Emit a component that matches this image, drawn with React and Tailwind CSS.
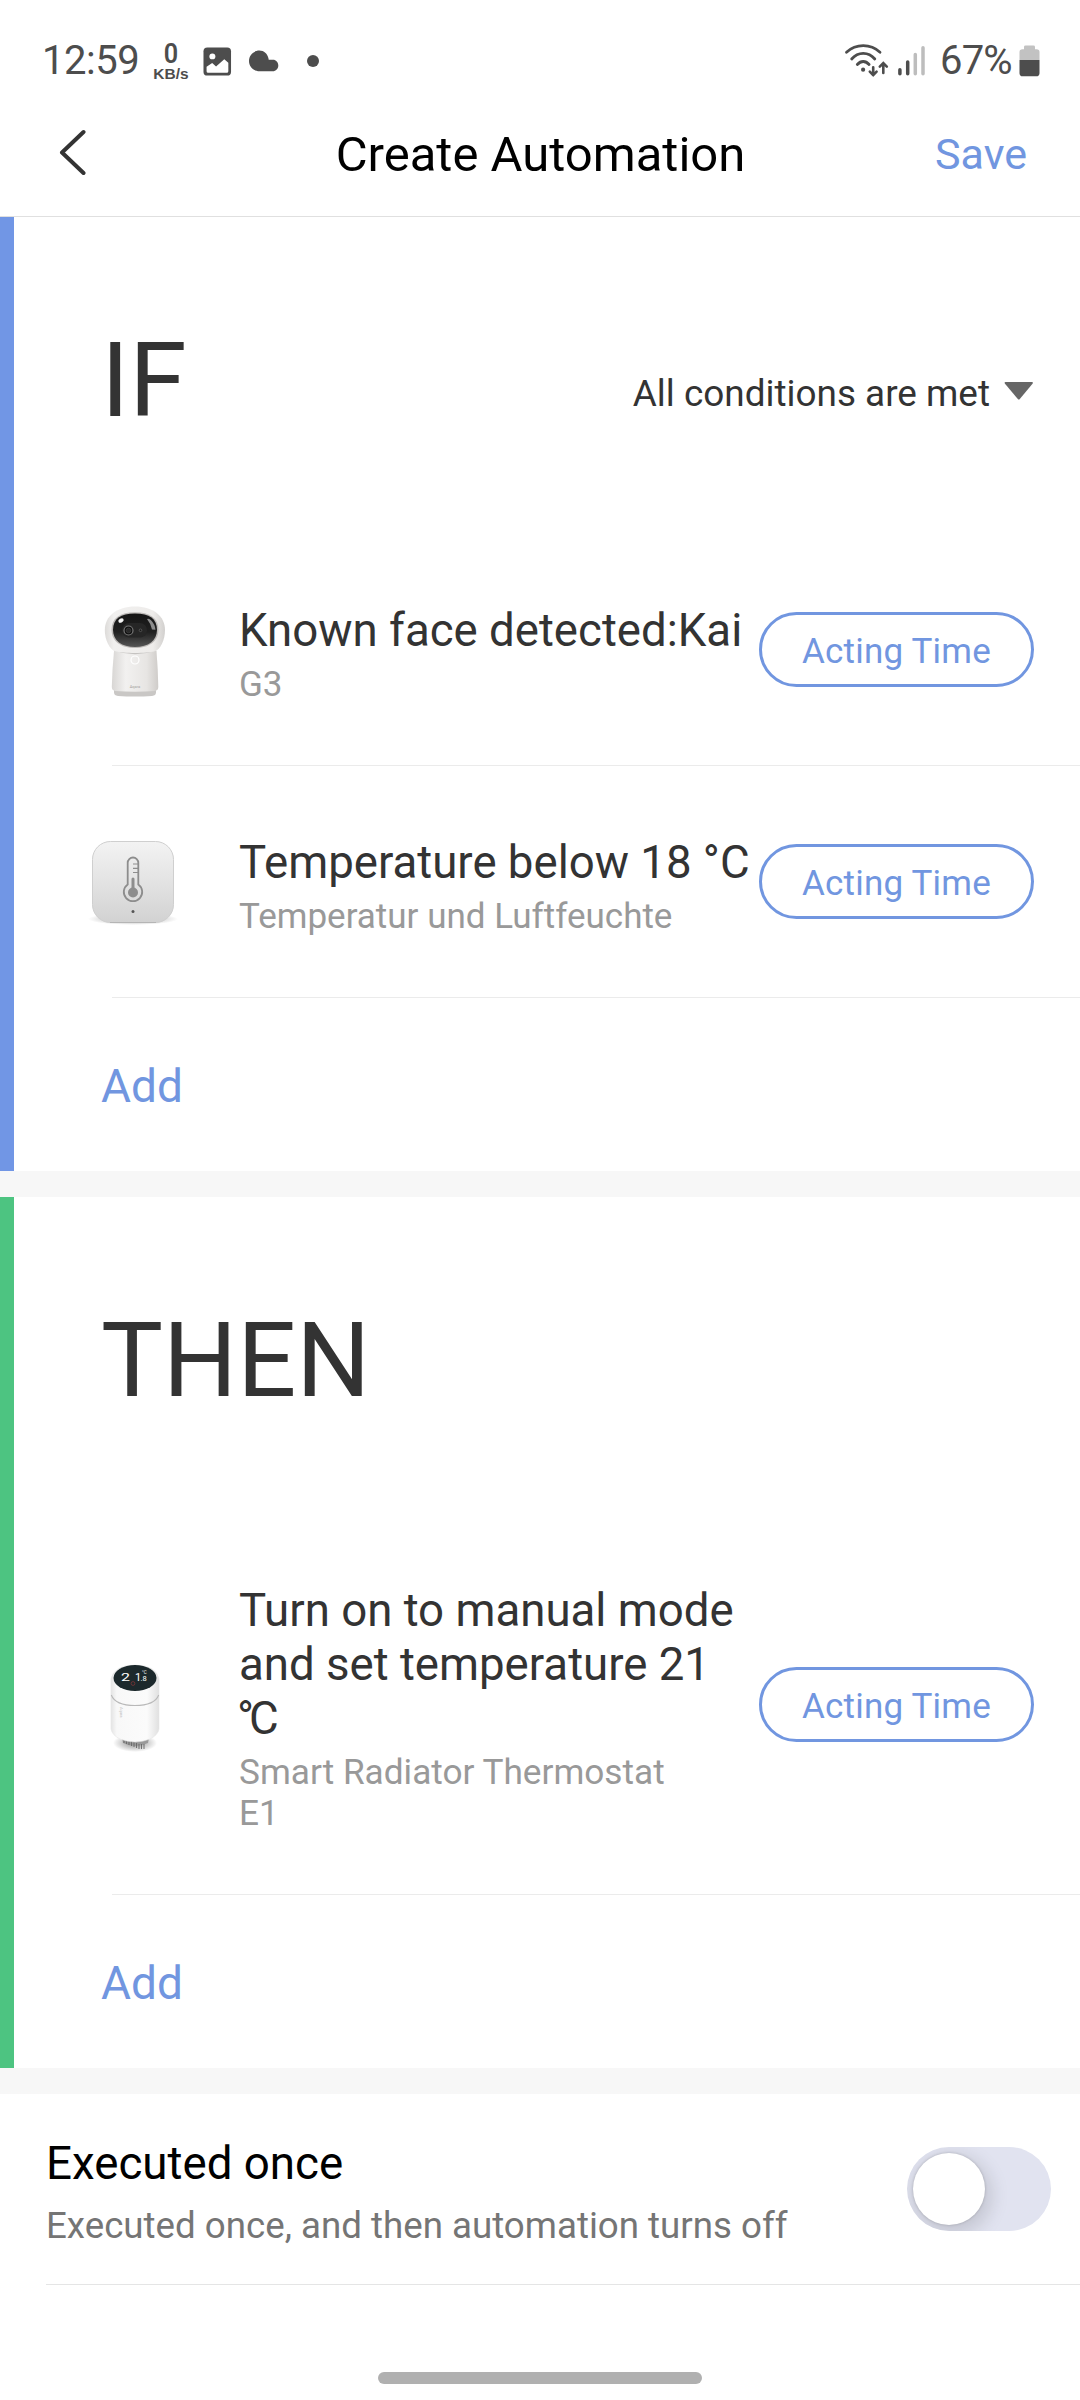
const BLUE_BAR = "bg-[#7196e5]";
const GREEN_BAR = "bg-[#4dc481]";

function StatusBar() {
  return (
    <div className="flex h-[120px] items-start justify-between pl-[42px] pr-[40px] pt-[37px] text-[#4d4d4d]">
      <div className="flex">
        <span className="w-[110px] text-[40px] leading-[48px] tracking-[-0.5px]">12:59</span>
        <div className="flex w-[38px] flex-col items-center pt-[5px] font-bold">
          <span className="h-[23px] scale-x-90 text-[28px] font-semibold leading-[23px]">0</span>
          <span className="font-['Liberation_Sans',sans-serif] text-[15.5px] leading-[18px]">KB/s</span>
        </div>
        <svg className="ml-[13px] mt-[10px]" width="29" height="29" viewBox="0 0 29 30">
          <rect x="0" y="0.5" width="28.5" height="29" rx="4" fill="#4d4d4d" />
          <circle cx="9.2" cy="9.7" r="3.1" fill="#fff" />
          <path d="M3.2 20.5 9 16.5l4 3.8 8.5-7.5 4.2 3.6V25a1.6 1.6 0 0 1-1.6 1.6H4.800a1.6 1.6 0 0 1-1.600-1.600z" fill="#fff" />
        </svg>
        <svg className="ml-[17px] mt-[13px]" width="30" height="22" viewBox="0 0 30 22">
          <path d="M10.300 0.600c4.700 0 8.200 3.200 9.200 7.900l.2 1.300h4.300c3 0 5.300 2.600 5.300 5.700 0 3.200-2.400 5.800-5.600 5.800H10.500C4.700 21.300 0 16.700 0 11 0 5.200 4.600.600 10.300.600z" fill="#4d4d4d" />
        </svg>
        <span className="ml-[28px] mt-[18px] size-3 rounded-full bg-[#4d4d4d]" />
      </div>
      <div className="flex">
        <svg className="mt-[6px]" width="47" height="36" viewBox="0 0 47 36" fill="none" stroke="#4d4d4d" strokeLinecap="round">
          <path d="M2.500 9.200C12 .400 26.500.400 36 9.200" strokeWidth="2.800" />
          <path d="M7.700 16c6.300-7.600 16.800-7.600 23.100 0" strokeWidth="2.800" />
          <path d="M13.300 21.500c3.600-4 8.200-4 11.800 0" strokeWidth="2.800" />
          <circle cx="19.100" cy="26.700" r="2.100" fill="#4d4d4d" stroke="none" />
          <path d="M29.200 24.300v7.700m-3.400-3.300 3.400 3.400 3.400-3.400M39.300 30V20.200m-3.500 3.500 3.500-3.500 3.500 3.500" strokeWidth="2.600" />
        </svg>
        <svg className="ml-[7px] mt-[8px]" width="29" height="32" viewBox="0 0 29 32" strokeWidth="3.500" strokeLinecap="round">
          <path d="M1.900 24.700v4.100M9.700 17.100v11.700" stroke="#4d4d4d" />
          <path d="M17.300 9.400v19.400M25 2.700v26.100" stroke="#bdbdbd" />
        </svg>
        <span className="ml-[13px] w-[79px] text-[40px] leading-[48px] tracking-[-0.8px]">67%</span>
        <svg className="mt-[8px]" width="21" height="32" viewBox="0 0 21 34" preserveAspectRatio="none">
          <path d="M6.500.500h8a1.500 1.500 0 0 1 1.500 1.500v2.500h1.500a3 3 0 0 1 3 3V16H.500V7.500a3 3 0 0 1 3-3H5V2A1.500 1.500 0 0 1 6.500.500z" fill="#c2c2c2" />
          <path d="M.500 16h20v14a3.300 3.300 0 0 1-3.300 3.300H3.800A3.300 3.300 0 0 1 .500 30z" fill="#4d4d4d" />
        </svg>
      </div>
    </div>
  );
}

function Header() {
  return (
    <header className="grid h-[97px] grid-cols-[1fr_auto_1fr] items-start border-b border-[#e0e0e0]">
      <button className="ml-[58px] mt-[8px] w-fit">
        <svg width="28" height="48" viewBox="0 0 28 48" fill="none">
          <path d="M25.500 4 4 24.500 25.500 45" stroke="#333" strokeWidth="4" strokeLinecap="round" strokeLinejoin="round" />
        </svg>
      </button>
      <h1 className="mt-[5px] pl-px text-[49px] leading-[60px] text-black">Create Automation</h1>
      <button className="mr-[53px] mt-[6px] justify-self-end text-[43px] leading-[56px] text-[#7196e0]">Save</button>
    </header>
  );
}

function CameraImage() {
  return (
    <svg width="62" height="94" viewBox="0 0 62 94">
      <defs>
        <linearGradient id="camHead" x1="0" x2="1">
          <stop offset="0" stopColor="#dddbd9" />
          <stop offset="0.15" stopColor="#f1f0ef" />
          <stop offset="0.8" stopColor="#eeecea" />
          <stop offset="1" stopColor="#d2d0ce" />
        </linearGradient>
        <linearGradient id="camBody" x1="0" x2="1">
          <stop offset="0" stopColor="#d8d6d4" />
          <stop offset="0.3" stopColor="#f2f1f0" />
          <stop offset="0.75" stopColor="#e7e5e3" />
          <stop offset="1" stopColor="#cfccc9" />
        </linearGradient>
        <linearGradient id="camFace" x1="0" y1="0" x2="0" y2="1">
          <stop offset="0" stopColor="#151515" />
          <stop offset="0.55" stopColor="#202020" />
          <stop offset="1" stopColor="#555" />
        </linearGradient>
      </defs>
      <path d="M10 83h42v3.500q0 3-4 3.500-17 1.200-34 0-4-.500-4-3.500z" fill="#c9c7c5" />
      <path d="M10 45h42.500q1.500 18 1.800 36 0 3.500-3.500 4-19.500 1.500-39.500 0-3.500-.500-3.500-4Q8.200 63 10 45z" fill="url(#camBody)" />
      <path d="M10 44q21 6.500 42 0" fill="none" stroke="#c5c3c1" strokeWidth="1.800" />
      <path d="M31 .500c18 0 30 9.500 30 23.500 0 10-4.500 19-10 21.300-9 2.200-31 2.200-40 0C5.500 43 .800 34 .800 24 .800 10 13 .500 31 .500z" fill="url(#camHead)" />
      <path d="M31 6.300c15 0 23.500 6 23.500 17.200C54.500 35.500 45 42 31 42S7.500 35.500 7.500 23.500C7.500 12.300 16 6.300 31 6.300z" fill="#bdbab8" />
      <path d="M31 7.500c14.500 0 22 5.500 22 16.200C53 34.500 44.500 41 31 41S9 34.500 9 23.700C9 13 16.500 7.500 31 7.500z" fill="url(#camFace)" />
      <rect x="18" y="17" width="25" height="14.500" rx="7" fill="#262626" />
      <circle cx="24.500" cy="24.500" r="4.500" fill="#111" stroke="#777" strokeWidth="1.200" />
      <circle cx="24.500" cy="24.500" r="2.300" fill="#292929" stroke="#444" strokeWidth=".6" />
      <circle cx="36.500" cy="24.300" r="1.300" fill="#191919" stroke="#666" strokeWidth=".7" />
      <ellipse cx="17" cy="14.500" rx="2.800" ry="2" fill="#f5f5f5" transform="rotate(-30 17 14.500)" />
      <path d="M43 13q2.500-.800 4 1.300 4 4 4.500 9.500l-3.500-.300q-1.200-6-5-10.500z" fill="#8c8c8c" />
      <circle cx="31" cy="54" r="4" fill="none" stroke="#fff" strokeWidth="1.200" />
      <text x="31" y="82" textAnchor="middle" fontSize="4" fill="#a5a3a1">Aqara</text>
    </svg>
  );
}

function SensorImage() {
  return (
    <svg width="94" height="90" viewBox="0 0 94 90">
      <defs>
        <linearGradient id="sensorFill" x1="0" y1="0" x2="0" y2="1">
          <stop offset="0" stopColor="#f3f3f3" />
          <stop offset="0.5" stopColor="#e3e3e3" />
          <stop offset="1" stopColor="#d2d2d2" />
        </linearGradient>
        <radialGradient id="sensorShadow">
          <stop offset="0.7" stopColor="#999" stopOpacity="0.3" />
          <stop offset="1" stopColor="#999" stopOpacity="0" />
        </radialGradient>
      </defs>
      <ellipse cx="45" cy="79" rx="45" ry="6" fill="url(#sensorShadow)" />
      <rect x="4.500" y="1.500" width="81" height="81" rx="18" fill="url(#sensorFill)" stroke="#cfcfcf" />
      <path d="M22 82.500h46" stroke="#b5b5b5" />
      <g fill="none" stroke="#8d8d8d" strokeWidth="1.800">
        <path d="M39.700 44.500V22.800a5.300 5.300 0 0 1 10.600 0v21.700a9.200 9.200 0 1 1-10.600 0z" />
        <path d="M45 39v13" strokeWidth="3" strokeLinecap="round" />
        <path d="M45 24h5M45 28.300h5M45 32.500h5" strokeWidth="1.200" />
      </g>
      <circle cx="45" cy="52.500" r="5" fill="#8d8d8d" />
      <circle cx="45" cy="71.500" r="1.500" fill="#555" />
    </svg>
  );
}

function ThermostatImage() {
  return (
    <svg width="62" height="90" viewBox="0 0 62 90">
      <defs>
        <linearGradient id="valveBody" x1="0" x2="1">
          <stop offset="0" stopColor="#e4e4e4" />
          <stop offset="0.12" stopColor="#f8f8f8" />
          <stop offset="0.75" stopColor="#fbfbfb" />
          <stop offset="1" stopColor="#e0e0e0" />
        </linearGradient>
        <radialGradient id="valveShadow">
          <stop offset="0.3" stopColor="#777" stopOpacity="0.6" />
          <stop offset="1" stopColor="#777" stopOpacity="0" />
        </radialGradient>
      </defs>
      <ellipse cx="31" cy="79" rx="22" ry="9" fill="url(#valveShadow)" />
      <path d="M18 74h27l-1 5q-13 6-25 0z" fill="#999" />
      <path d="M20 79v-5m2.500 6v-5m2.500 6v-5m2.500 6v-5m2.500 6v-5m2.500 6v-5m2.500 6v-5m2.500 5v-5m2.500 5v-5" stroke="#666" strokeWidth=".9" />
      <path d="M7 15Q10 1 31 1t24 14v50q-1 6-9 10-15 6-30 0-8-4-9-10z" fill="url(#valveBody)" stroke="#e5e5e5" strokeWidth=".6" />
      <path d="M7.300 31q4 10.500 23.700 10.500T54.700 31" fill="none" stroke="#b9b9b9" strokeWidth="1.100" />
      <ellipse cx="31" cy="14" rx="21.500" ry="13" fill="#1c292c" />
      <g fill="#fff" fontFamily="Roboto, sans-serif">
        <text x="17" y="16.500" fontSize="11" textLength="9" lengthAdjust="spacingAndGlyphs">2</text>
        <text x="31" y="16.500" fontSize="11">1</text>
        <text x="38" y="10" fontSize="4.500">°C</text>
        <text x="36.500" y="16.500" fontSize="7.500">.8</text>
      </g>
      <circle cx="29" cy="19.500" r="1.900" fill="none" stroke="#7b3535" strokeWidth=".8" />
      <text x="0" y="0" fontSize="4" fill="#c4c4c4" transform="translate(16 43) rotate(90)">Aqara</text>
    </svg>
  );
}

function ActingTimeButton() {
  return (
    <button className="ml-auto mr-[46px] h-[75px] w-[275px] shrink-0 rounded-full border-3 border-[#7196e0] pt-[3px] text-[35px] leading-[41px] tracking-[0.2px] text-[#7196e0]">
      Acting Time
    </button>
  );
}

function DeviceRow({ image, title, device, tall }) {
  return (
    <div>
      <div className={tall ? "flex h-[379px] items-center" : "flex h-[231px] items-center"}>
        <div className={tall ? "flex w-[225px] shrink-0 justify-center pl-[17px] pt-[8px]" : "flex w-[225px] shrink-0 justify-center pl-[17px] pt-[6px]"}>
          {image}
        </div>
        <div className={tall ? "w-[500px] pt-[8px]" : "whitespace-nowrap pt-[10px]"}>
          <p className="text-[45.6px] leading-[54px] text-[#333]">{title}</p>
          <p className={tall ? "mt-[6px] w-[440px] text-[35.2px] leading-[41px] text-[#999]" : "mt-[6px] text-[35px] leading-[41px] text-[#999]"}>{device}</p>
        </div>
        <ActingTimeButton />
      </div>
      <div className="ml-[98px] h-px bg-[#ebebeb]" />
    </div>
  );
}

function Section({ bar, children, className }) {
  return (
    <section className={`flex ${className}`}>
      <div className={`w-[14px] shrink-0 ${bar}`} />
      <div className="min-w-0 flex-1">{children}</div>
    </section>
  );
}

function AddButton() {
  return <button className="ml-[87px] mt-[61px] block text-[46px] leading-[54px] text-[#7196e0]">Add</button>;
}

export default function App() {
  return (
    <div className="flex h-[2400px] w-[1080px] flex-col overflow-hidden bg-white font-[Roboto,sans-serif]">
      <StatusBar />
      <Header />

      <Section bar={BLUE_BAR} className="h-[954px]">
        <div className="flex h-[317px] justify-between pl-[87px] pr-[46px]">
          <h2 className="pt-[101px] text-[104px] leading-[126px] text-[#333]">IF</h2>
          <button className="flex h-fit items-center pt-[155px] text-[36.9px] leading-[44px] text-[#333]">
            All conditions are met
            <svg className="mb-[6px] ml-[14px]" width="30" height="18" viewBox="0 0 30 18">
              <path d="M1.500 0h26.500q1.500.300.500 1.800L15.800 17q-1 1-2 0L1 1.800Q0 .300 1.500 0z" fill="#666" />
            </svg>
          </button>
        </div>
        <DeviceRow image={<CameraImage />} title="Known face detected:Kai" device="G3" />
        <DeviceRow image={<SensorImage />} title="Temperature below 18 °C" device="Temperatur und Luftfeuchte" />
        <AddButton />
      </Section>
      <div className="h-[26px] shrink-0 bg-[#f7f7f7]" />

      <Section bar={GREEN_BAR} className="h-[871px]">
        <h2 className="h-[318px] pl-[87px] pt-[101px] text-[104px] leading-[126px] text-[#333]">THEN</h2>
        <DeviceRow
          tall
          image={<ThermostatImage />}
          title={
            <>
              Turn on to manual mode and set temperature 21{" "}
              <span className="-ml-[2px] whitespace-nowrap"><span className="tracking-[-5px]">°</span>C</span>
            </>
          }
          device="Smart Radiator Thermostat E1"
        />
        <AddButton />
      </Section>
      <div className="h-[26px] shrink-0 bg-[#f7f7f7]" />

      <div className="ml-[46px] flex h-[191px] items-start justify-between border-b border-[#e5e5e5] pr-[29px]">
        <div className="pt-[43px]">
          <p className="text-[45.7px] leading-[54px] text-black">Executed once</p>
          <p className="mt-[14px] text-[36.7px] leading-[42px] text-[#757575]">Executed once, and then automation turns off</p>
        </div>
        <button className="mt-[53px] h-[84px] w-[144px] overflow-hidden rounded-full bg-[#e1e3f0] p-[6px]">
          <span className="block size-[72px] rounded-full bg-white shadow-[3px_6px_18px_4px_rgba(0,0,0,0.13),0_0_3px_rgba(0,0,0,0.2)]" />
        </button>
      </div>
      <div className="mt-auto mb-[16px] h-[12px] w-[324px] self-center rounded-full bg-[#b0b0b0]" />
    </div>
  );
}
